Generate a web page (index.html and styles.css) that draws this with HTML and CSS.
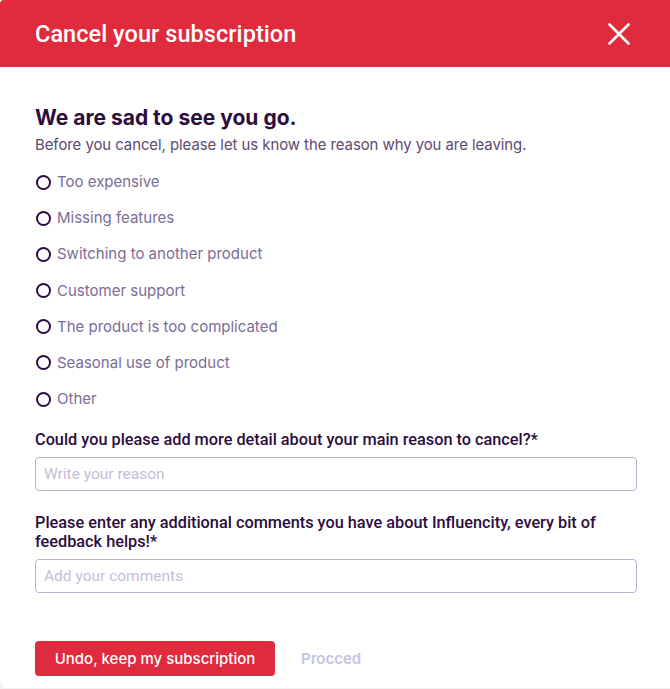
FILE: index.html
```html
<!DOCTYPE html>
<html lang="en">
<head>
<meta charset="utf-8">
<title>Cancel your subscription</title>
<link rel="stylesheet" href="styles.css">
</head>
<body>
<div class="modal">
  <header class="modal-header">
    <h1 class="modal-title">Cancel your subscription</h1>
    <button class="close" aria-label="Close">
      <svg width="22" height="22" viewBox="0 0 22 22"><path d="M1.5 1.5 L20.5 20.5 M20.5 1.5 L1.5 20.5" stroke="#fff" stroke-width="2.6" stroke-linecap="round"/></svg>
    </button>
  </header>
  <div class="modal-body">
    <h2 class="headline">We are sad to see you go.</h2>
    <p class="intro">Before you cancel, please let us know the reason why you are leaving.</p>
    <ul class="reasons">
      <li class="reason"><span class="radio"></span>Too expensive</li>
      <li class="reason"><span class="radio"></span>Missing features</li>
      <li class="reason"><span class="radio"></span>Switching to another product</li>
      <li class="reason"><span class="radio"></span>Customer support</li>
      <li class="reason"><span class="radio"></span>The product is too complicated</li>
      <li class="reason"><span class="radio"></span>Seasonal use of product</li>
      <li class="reason"><span class="radio"></span>Other</li>
    </ul>
    <label class="field">
      <span class="field-label">Could you please add more detail about your main reason to cancel?*</span>
      <input class="input" type="text" placeholder="Write your reason">
    </label>
    <label class="field field-second">
      <span class="field-label">Please enter any additional comments you have about Influencity, every bit of feedback helps!*</span>
      <input class="input" type="text" placeholder="Add your comments">
    </label>
    <div class="actions">
      <button class="btn-primary">Undo, keep my subscription</button>
      <button class="btn-link">Procced</button>
    </div>
  </div>
</div>
</body>
</html>
```
FILE: styles.css
```css
* { box-sizing: border-box; }
html, body { margin: 0; padding: 0; background: #f2f2f4; }
body { font-family: Inter, "Open Sans", sans-serif; }
.modal {
  width: 670px;
  height: 688px;
  background: #fff;
  border-radius: 4px 0 0 8px;
  overflow: hidden;
  display: flex;
  flex-direction: column;
}
.modal-header {
  height: 67px;
  background: #e02a3d;
  display: flex;
  align-items: center;
  justify-content: space-between;
  padding: 0 40px 0 35px;
  flex-shrink: 0;
}
.modal-title {
  margin: 0;
  color: #fff;
  font-family: Roboto, sans-serif;
  font-weight: 500;
  font-size: 23.5px;
  letter-spacing: 0.05px;
}
.close {
  border: 0;
  background: none;
  padding: 0;
  width: 22px;
  height: 22px;
  display: flex;
  cursor: pointer;
}
.modal-body {
  padding: 38px 34px 0 35px;
  display: flex;
  flex-direction: column;
}
.headline {
  margin: 0;
  font-size: 21px;
  font-weight: 700;
  color: #2b0d3e;
  line-height: 26px;
}
.intro {
  margin: 4px 0 0;
  font-size: 14.9px;
  letter-spacing: -0.04px;
  color: #5c4a70;
  line-height: 20px;
}
.reasons {
  list-style: none;
  margin: 17px 0 0;
  padding: 0;
  display: flex;
  flex-direction: column;
  gap: 16.2px;
}
.reason {
  display: flex;
  align-items: center;
  gap: 6px;
  font-size: 15px;
  line-height: 20px;
  color: #7a6d96;
}
.radio {
  width: 15px;
  height: 15px;
  border: 2px solid #2b0d3e;
  border-radius: 50%;
  margin-left: 1px;
}
.field { display: flex; flex-direction: column; margin-top: 21px; }
.field-second { margin-top: 22px; }
.field-label {
  font-family: Roboto, sans-serif;
  font-weight: 500;
  font-size: 16.3px;
  line-height: 19px;
  color: #2b0d3e;
  margin-bottom: 8px;
}
.input {
  height: 34px;
  width: 602px;
  border: 1.5px solid #b9b3cf;
  border-radius: 4px;
  padding: 0 8px;
  font-family: Roboto, sans-serif;
  font-size: 15.5px;
  color: #2b0d3e;
  outline: none;
}
.input::placeholder { color: #c3bedb; }
.actions {
  margin-top: 48px;
  display: flex;
  align-items: center;
  gap: 26px;
}
.btn-primary {
  height: 35px;
  width: 240px;
  border: 0;
  border-radius: 4px;
  background: #e02a3d;
  color: #fff;
  font-family: Inter, sans-serif;
  font-weight: 500;
  font-size: 15px;
  cursor: pointer;
}
.btn-link {
  border: 0;
  background: none;
  padding: 0;
  font-family: Inter, sans-serif;
  font-weight: 600;
  font-size: 15px;
  color: #c6c4e0;
  cursor: pointer;
}
```
